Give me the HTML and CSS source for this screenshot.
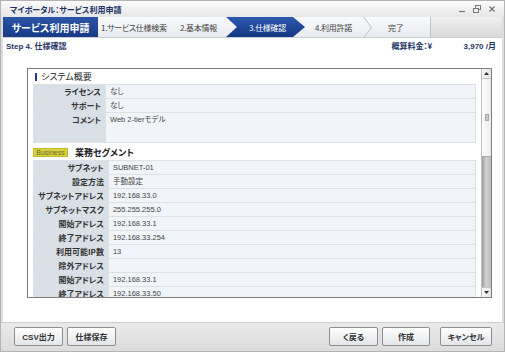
FILE: index.html
```html
<!DOCTYPE html>
<html lang="ja">
<head>
    <meta charset="UTF-8">
    <meta name="viewport" content="width=device-width, initial-scale=1.0">
    <link rel="stylesheet" href="styles.css">
    <title>サービス利用申請</title>
</head>
<body>
    <div class="window">
        <div class="titlebar">
            <span class="title">マイポータル：サービス利用申請</span>
            <div class="controls">
                <svg width="8" height="8" viewBox="0 0 8 8"><line x1="1" y1="6.5" x2="7" y2="6.5" stroke="#777" stroke-width="1.2"/></svg>
                <svg width="8" height="8" viewBox="0 0 8 8"><rect x="2.5" y="0.5" width="5" height="4" fill="none" stroke="#777"/><rect x="0.5" y="3.5" width="5" height="4" fill="#eee" stroke="#777"/></svg>
                <svg width="8" height="8" viewBox="0 0 8 8"><path d="M1.5 1.5 L6.5 6.5 M6.5 1.5 L1.5 6.5" stroke="#777" stroke-width="1.3"/></svg>
            </div>
        </div>

        <div class="steps">
            <div class="app-name">サービス利用申請</div>
            <div class="step s1"><span>1.サービス仕様検索</span><svg class="chev" width="9" height="21" viewBox="0 0 9 21"><polyline points="0.5,0 8.5,10.5 0.5,21" fill="none" stroke="#b9bec6"/></svg></div>
            <div class="step s2"><span>2.基本情報</span></div>
            <div class="step s3 active"><span>3.仕様確認</span></div>
            <div class="step s4"><span>4.利用許諾</span><svg class="chev" width="9" height="21" viewBox="0 0 9 21"><polyline points="0.5,0 8.5,10.5 0.5,21" fill="none" stroke="#b9bec6"/></svg></div>
            <div class="step s5"><span>完了</span></div>
            <div class="step-rest"></div>
        </div>

        <div class="main">
            <div class="stepline">
                <span class="step-title">Step 4. 仕様確認</span>
                <span class="fee-label">概算料金：¥</span>
                <span class="fee">3,970 /月</span>
            </div>

            <div class="panel">
                <div class="scroll">
                    <div class="section-head"><span class="bar"></span>システム概要</div>
                    <table class="spec">
                        <tr><th>ライセンス</th><td>なし</td></tr>
                        <tr><th>サポート</th><td>なし</td></tr>
                        <tr class="tall"><th>コメント</th><td>Web 2-tierモデル</td></tr>
                    </table>

                    <div class="section-head seg"><span class="badge">Business</span>業務セグメント</div>
                    <table class="spec">
                        <tr><th>サブネット</th><td>SUBNET-01</td></tr>
                        <tr><th>設定方法</th><td>手動設定</td></tr>
                        <tr><th>サブネットアドレス</th><td>192.168.33.0</td></tr>
                        <tr><th>サブネットマスク</th><td>255.255.255.0</td></tr>
                        <tr><th>開始アドレス</th><td>192.168.33.1</td></tr>
                        <tr><th>終了アドレス</th><td>192.168.33.254</td></tr>
                        <tr><th>利用可能IP数</th><td>13</td></tr>
                        <tr><th>除外アドレス</th><td></td></tr>
                        <tr><th>開始アドレス</th><td>192.168.33.1</td></tr>
                        <tr><th>終了アドレス</th><td>192.168.33.50</td></tr>
                        <tr><th>&nbsp;</th><td></td></tr>
                    </table>
                </div>
                <div class="scrollbar">
                    <div class="sb-btn"><svg width="5" height="3" viewBox="0 0 5 3"><polygon points="0,3 5,3 2.5,0" fill="#333"/></svg></div>
                    <div class="sb-thumb"><span class="grip"></span></div>
                    <div class="sb-track"></div>
                    <div class="sb-btn"><svg width="5" height="3" viewBox="0 0 5 3"><polygon points="0,0 5,0 2.5,3" fill="#333"/></svg></div>
                </div>
            </div>
        </div>

        <div class="footer">
            <div class="btns">
                <button>CSV出力</button>
                <button>仕様保存</button>
            </div>
            <div class="btns">
                <button>く戻る</button>
                <button class="narrow">作成</button>
                <button class="wide">キャンセル</button>
            </div>
        </div>
    </div>
</body>
</html>
```

FILE: styles.css
```css
* {
    margin: 0;
    padding: 0;
    box-sizing: border-box;
}
body {
    width: 505px;
    height: 352px;
    overflow: hidden;
    font-family: "Noto Sans CJK JP", sans-serif;
    font-feature-settings: "palt";
    color: #333;
}
.window {
    width: 505px;
    height: 352px;
    display: flex;
    flex-direction: column;
    background: #dedede;
    border: 1px solid #b4b4b4;
}

/* title bar */
.titlebar {
    height: 16px;
    flex-shrink: 0;
    display: flex;
    align-items: center;
    justify-content: space-between;
    padding: 0 8px 0 9px;
    background: linear-gradient(#fbfbfb, #e6e6e6);
}
.title {
    font-size: 8px;
    font-weight: bold;
    color: #1f3466;
}
.controls {
    display: flex;
    gap: 7px;
}

/* steps */
.steps {
    height: 21px;
    flex-shrink: 0;
    margin: 0 2px;
    display: flex;
    background: linear-gradient(#f9fafc, #e8ebf0);
    border-bottom: 1px solid #c9ced6;
}
.app-name {
    width: 95px;
    display: flex;
    align-items: center;
    justify-content: center;
    font-size: 10px;
    font-weight: bold;
    color: #fff;
    background: linear-gradient(#2d54a6, #163a86);
}
.step {
    display: flex;
    align-items: center;
    justify-content: space-between;
    font-size: 8px;
    color: #444;
    white-space: nowrap;
}
.step span {
    padding-left: 3px;
    letter-spacing: -0.3px;
}
.s1 { width: 70px; }
.s2 { width: 58px; padding-left: 9px; }
.s3 { width: 79px; }
.s4 { width: 67px; padding-left: 7px; }
.s5 { width: 58px; padding-left: 13px; }
.active {
    justify-content: center;
    color: #fff;
    background: linear-gradient(#2d58ad, #143884);
    clip-path: polygon(0 0, 67px 0, 100% 50%, 67px 100%, 0 100%, 11px 50%);
}
.active span {
    padding-left: 4px;
}
.step-rest {
    flex: 1;
    background: linear-gradient(#f0f0f0, #d9d9d9);
    border-left: 1px solid #c4c4c4;
}

/* main */
.main {
    flex: 1;
    margin: 0 2px;
    background: #fff;
    display: flex;
    flex-direction: column;
}
.stepline {
    height: 14px;
    display: flex;
    align-items: center;
    padding: 0 6px 0 3px;
    font-size: 8px;
    font-weight: bold;
    color: #1f3466;
}
.step-title {
    flex: 1;
    font-family: "Liberation Sans", "Noto Sans CJK JP", sans-serif;
}
.fee-label {
    width: 72px;
}
.fee {
    font-family: "Liberation Sans", "Noto Sans CJK JP", sans-serif;
}

/* scroll panel */
.panel {
    margin: 16px 10px 0 24px;
    height: 230px;
    display: flex;
    border: 1px solid #7f7f7f;
}
.scroll {
    flex: 1;
    overflow: hidden;
    padding: 0 5px 0 5px;
}
.section-head {
    height: 15px;
    display: flex;
    align-items: center;
    font-size: 9px;
    color: #222;
}
.section-head .bar {
    width: 2px;
    height: 8px;
    background: #1c3d8c;
    margin: 0 4px 0 2px;
}
.section-head.seg {
    height: 17px;
    padding-top: 1px;
    font-weight: bold;
}
.badge {
    width: 35px;
    height: 9px;
    margin-right: 7px;
    display: flex;
    align-items: center;
    justify-content: center;
    font-family: "Liberation Sans", sans-serif;
    font-size: 7px;
    font-weight: normal;
    color: #6a6530;
    background: #d8d23d;
    border: 1px solid #c1ba2d;
}
.spec {
    width: 100%;
    border-collapse: collapse;
    font-size: 8px;
}
.spec th, .spec td {
    border: 1px solid #dde1e6;
    padding: 0 4px;
    height: 14px;
    line-height: 12px;
    vertical-align: middle;
}
.spec th {
    width: 72px;
    text-align: right;
    font-weight: bold;
    color: #333;
    background: #d9dfe6;
    white-space: nowrap;
}
.spec td {
    font-family: "Liberation Sans", "Noto Sans CJK JP", sans-serif;
    font-size: 7.5px;
    color: #444;
    background: #f1f5fa;
}
.spec tr.tall th, .spec tr.tall td {
    height: 30px;
    vertical-align: top;
    padding-top: 1px;
}

/* scrollbar */
.scrollbar {
    width: 10px;
    display: flex;
    flex-direction: column;
    border-left: 1px solid #bdbdbd;
    background: #f2f2f2;
}
.sb-btn {
    height: 10px;
    display: flex;
    align-items: center;
    justify-content: center;
    background: linear-gradient(90deg, #fafafa, #e4e4e4);
    border-bottom: 1px solid #c4c4c4;
}
.sb-btn:last-child {
    border-bottom: none;
    border-top: 1px solid #c4c4c4;
}
.sb-thumb {
    height: 78px;
    display: flex;
    align-items: center;
    justify-content: center;
    background: linear-gradient(90deg, #fdfdfd, #ececec);
    border-bottom: 1px solid #a9a9a9;
}
.grip {
    width: 4px;
    height: 7px;
    background: #c9c9c9;
    border: 1px solid #a8a8a8;
}
.sb-track {
    flex: 1;
    background: linear-gradient(90deg, #9c9c9c, #d2d2d2 45%, #bdbdbd);
}

/* footer */
.footer {
    height: 29px;
    flex-shrink: 0;
    display: flex;
    justify-content: space-between;
    align-items: flex-start;
    padding: 4px 12px 0 13px;
    background: linear-gradient(#e9e9e9, #dcdcdc);
    border-top: 1px solid #cfcfcf;
}
.btns {
    display: flex;
    gap: 4px;
}
.btns button {
    width: 49px;
    height: 19px;
    font-family: "Liberation Sans", "Noto Sans CJK JP", sans-serif;
    font-feature-settings: "palt";
    font-size: 8px;
    font-weight: bold;
    color: #333;
    background: linear-gradient(#ffffff, #e3e5e8);
    border: 1px solid #8e8e8e;
    border-radius: 2px;
}
.btns button.narrow {
    width: 48px;
    margin-right: 6px;
}
.btns button.wide {
    width: 52px;
}
```
